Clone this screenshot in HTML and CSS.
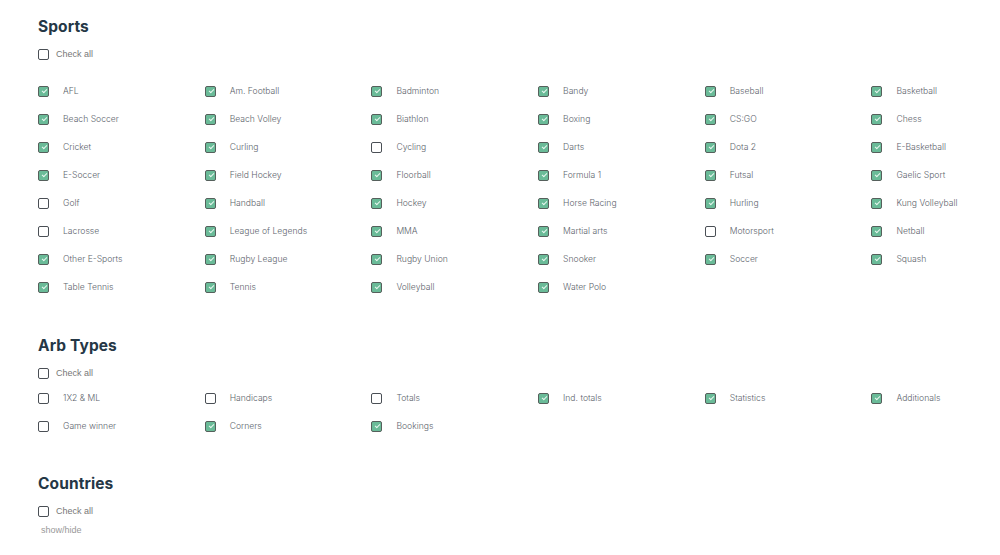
FILE: index.html
```html
<!DOCTYPE html>
<html>
<head>
<meta charset="utf-8">
<link rel="stylesheet" href="styles.css">
</head>
<body>
<div class="page">
  <section class="section sports">
    <h2 class="title">Sports</h2>
    <label class="check-all"><span class="box"></span><span class="ca-text">Check all</span></label>
    <div class="grid">
      <label class="item"><span class="box on"></span><span>AFL</span></label>
      <label class="item"><span class="box on"></span><span>Am. Football</span></label>
      <label class="item"><span class="box on"></span><span>Badminton</span></label>
      <label class="item"><span class="box on"></span><span>Bandy</span></label>
      <label class="item"><span class="box on"></span><span>Baseball</span></label>
      <label class="item"><span class="box on"></span><span>Basketball</span></label>
      <label class="item"><span class="box on"></span><span>Beach Soccer</span></label>
      <label class="item"><span class="box on"></span><span>Beach Volley</span></label>
      <label class="item"><span class="box on"></span><span>Biathlon</span></label>
      <label class="item"><span class="box on"></span><span>Boxing</span></label>
      <label class="item"><span class="box on"></span><span>CS:GO</span></label>
      <label class="item"><span class="box on"></span><span>Chess</span></label>
      <label class="item"><span class="box on"></span><span>Cricket</span></label>
      <label class="item"><span class="box on"></span><span>Curling</span></label>
      <label class="item"><span class="box"></span><span>Cycling</span></label>
      <label class="item"><span class="box on"></span><span>Darts</span></label>
      <label class="item"><span class="box on"></span><span>Dota 2</span></label>
      <label class="item"><span class="box on"></span><span>E-Basketball</span></label>
      <label class="item"><span class="box on"></span><span>E-Soccer</span></label>
      <label class="item"><span class="box on"></span><span>Field Hockey</span></label>
      <label class="item"><span class="box on"></span><span>Floorball</span></label>
      <label class="item"><span class="box on"></span><span>Formula 1</span></label>
      <label class="item"><span class="box on"></span><span>Futsal</span></label>
      <label class="item"><span class="box on"></span><span>Gaelic Sport</span></label>
      <label class="item"><span class="box"></span><span>Golf</span></label>
      <label class="item"><span class="box on"></span><span>Handball</span></label>
      <label class="item"><span class="box on"></span><span>Hockey</span></label>
      <label class="item"><span class="box on"></span><span>Horse Racing</span></label>
      <label class="item"><span class="box on"></span><span>Hurling</span></label>
      <label class="item"><span class="box on"></span><span>Kung Volleyball</span></label>
      <label class="item"><span class="box"></span><span>Lacrosse</span></label>
      <label class="item"><span class="box on"></span><span>League of Legends</span></label>
      <label class="item"><span class="box on"></span><span>MMA</span></label>
      <label class="item"><span class="box on"></span><span>Martial arts</span></label>
      <label class="item"><span class="box"></span><span>Motorsport</span></label>
      <label class="item"><span class="box on"></span><span>Netball</span></label>
      <label class="item"><span class="box on"></span><span>Other E-Sports</span></label>
      <label class="item"><span class="box on"></span><span>Rugby League</span></label>
      <label class="item"><span class="box on"></span><span>Rugby Union</span></label>
      <label class="item"><span class="box on"></span><span>Snooker</span></label>
      <label class="item"><span class="box on"></span><span>Soccer</span></label>
      <label class="item"><span class="box on"></span><span>Squash</span></label>
      <label class="item"><span class="box on"></span><span>Table Tennis</span></label>
      <label class="item"><span class="box on"></span><span>Tennis</span></label>
      <label class="item"><span class="box on"></span><span>Volleyball</span></label>
      <label class="item"><span class="box on"></span><span>Water Polo</span></label>
    </div>
  </section>

  <section class="section arb">
    <h2 class="title">Arb Types</h2>
    <label class="check-all"><span class="box"></span><span class="ca-text">Check all</span></label>
    <div class="grid">
      <label class="item"><span class="box"></span><span>1X2 &amp; ML</span></label>
      <label class="item"><span class="box"></span><span>Handicaps</span></label>
      <label class="item"><span class="box"></span><span>Totals</span></label>
      <label class="item"><span class="box on"></span><span>Ind. totals</span></label>
      <label class="item"><span class="box on"></span><span>Statistics</span></label>
      <label class="item"><span class="box on"></span><span>Additionals</span></label>
      <label class="item"><span class="box"></span><span>Game winner</span></label>
      <label class="item"><span class="box on"></span><span>Corners</span></label>
      <label class="item"><span class="box on"></span><span>Bookings</span></label>
    </div>
  </section>

  <section class="section countries">
    <h2 class="title">Countries</h2>
    <label class="check-all"><span class="box"></span><span class="ca-text">Check all</span></label>
    <div class="toggle">show/hide</div>
  </section>
</div>
</body>
</html>
```

FILE: styles.css
```css
html, body {
  margin: 0;
  padding: 0;
  background: #ffffff;
  overflow: hidden;
}

.page {
  padding: 17px 0 0 38px;
  font-family: Inter, "Noto Sans", sans-serif;
}

.section {
  display: flex;
  flex-direction: column;
}

.title {
  margin: 0;
  height: 20px;
  line-height: 20px;
  font-size: 15.5px;
  font-weight: 700;
  color: #253746;
  letter-spacing: 0.1px;
}

.check-all {
  display: flex;
  align-items: center;
  height: 14px;
  margin-top: 10px;
}

.ca-text {
  font-family: "Liberation Sans", Arial, sans-serif;
  font-size: 9px;
  font-weight: 400;
  color: #777777;
}

.check-all .box {
  margin-right: 7px;
}

.grid {
  display: grid;
  grid-template-columns: repeat(6, 166.7px);
  grid-auto-rows: 28px;
  margin-top: 16px;
}

.item {
  display: flex;
  align-items: center;
  font-size: 8.6px;
  font-weight: 300;
  color: #60656d;
}

.item .box {
  margin-right: 14px;
}

.box {
  box-sizing: border-box;
  width: 11px;
  height: 11px;
  border: 1px solid #4a4f55;
  border-radius: 2px;
  background: #fff;
  flex: none;
  position: relative;
}

.box.on {
  background: #6abb98;
  border-color: #56605c;
}

.box.on::after {
  content: "";
  position: absolute;
  left: 3px;
  top: 2px;
  width: 4px;
  height: 2px;
  border-left: 1px solid #e8f7ef;
  border-bottom: 1px solid #e8f7ef;
  transform: rotate(-45deg);
}

.arb {
  margin-top: 35px;
}

.arb .check-all {
  margin-top: 10px;
}

.arb .grid {
  margin-top: 4px;
}

.countries {
  margin-top: 34px;
}

.countries .check-all {
  margin-top: 10px;
}

.toggle {
  margin-top: 6px;
  margin-left: 3px;
  height: 12px;
  line-height: 12px;
  font-family: "Liberation Sans", Arial, sans-serif;
  font-size: 9px;
  color: #999;
}
```
